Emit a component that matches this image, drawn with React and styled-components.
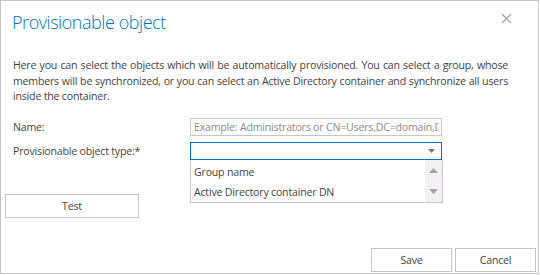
import React from 'react';
import styled, { createGlobalStyle } from 'styled-components';

const GlobalStyle = createGlobalStyle`
  html, body {
    margin: 0;
    padding: 0;
    background: #fff;
  }
  body {
    font-family: "Open Sans", "Noto Sans", sans-serif;
    color: #444;
  }
  * {
    box-sizing: border-box;
  }
`;

const Dialog = styled.div`
  width: 539px;
  height: 274px;
  border: 1px solid #c6c6c6;
  display: flex;
  flex-direction: column;
  background: #fff;
`;

const Header = styled.div`
  display: flex;
  align-items: flex-start;
  justify-content: space-between;
  padding: 8px 26px 0 11px;
  height: 44px;
`;

const Title = styled.h1`
  margin: 0;
  font-family: "Open Sans", "Noto Sans", sans-serif;
  font-weight: 300;
  font-size: 18px;
  line-height: 26px;
  letter-spacing: -0.45px;
  color: #0072c6;
`;

const CloseButton = styled.button`
  border: 0;
  background: none;
  padding: 0;
  margin-top: 4px;
  width: 11px;
  height: 11px;
  display: flex;
  cursor: pointer;
`;

const Body = styled.div`
  padding: 13px 30px 0 12px;
  display: flex;
  flex-direction: column;
`;

const Description = styled.p`
  margin: 0 0 13px;
  font-size: 10.6px;
  letter-spacing: -0.2px;
  line-height: 15.5px;
  text-align: justify;
  color: #444;
`;

const FormGrid = styled.div`
  display: grid;
  grid-template-columns: 177px 252px;
  row-gap: 6px;
  align-items: center;
`;

const Label = styled.label`
  font-size: 10.6px;
  letter-spacing: -0.2px;
  color: #444;
`;

const TextInput = styled.input`
  height: 18px;
  width: 252px;
  border: 1px solid #c6c6c6;
  padding: 0 3px;
  font-family: inherit;
  font-size: 10.6px;
  letter-spacing: -0.2px;
  color: #444;
  outline: none;
  &::placeholder {
    color: #8a8a8a;
  }
`;

const SelectWrap = styled.div`
  position: relative;
  width: 252px;
`;

const SelectBox = styled.div`
  height: 18px;
  border: 1px solid #0072c6;
  display: flex;
  align-items: center;
  justify-content: flex-end;
  padding-right: 6px;
`;

const List = styled.div`
  position: absolute;
  left: 0;
  top: 18px;
  width: 253px;
  height: 43px;
  border: 1px solid #c6c6c6;
  border-top: 0;
  background: #fff;
  display: flex;
  z-index: 10;
`;

const Options = styled.div`
  flex: 1;
  display: flex;
  flex-direction: column;
  padding-top: 2px;
`;

const Option = styled.div`
  height: 20px;
  line-height: 20px;
  padding-left: 3px;
  font-size: 10.6px;
  letter-spacing: -0.2px;
  color: #444;
  white-space: nowrap;
`;

const Scrollbar = styled.div`
  width: 17px;
  background: #f4f1f4;
  display: flex;
  flex-direction: column;
  justify-content: space-between;
  align-items: center;
  padding: 8px 0 8px;
`;

const Actions = styled.div`
  padding: 0 0 0 4px;
  margin-top: 33px;
`;

const Button = styled.button`
  width: ${({ $width }) => $width}px;
  height: 24px;
  border: 1px solid #c6c6c6;
  background: #fff;
  font-family: inherit;
  font-size: 10.6px;
  letter-spacing: -0.2px;
  color: #444;
  padding: 0;
  cursor: pointer;
`;

const Footer = styled.div`
  margin-top: auto;
  display: flex;
  justify-content: flex-end;
  gap: 3px;
  padding: 0 2px 1px 0;
`;

const Triangle = ({ up }) => (
  <svg width="9" height="5" viewBox="0 0 9 5">
    <path d={up ? 'M0 5 L4.5 0 L9 5 Z' : 'M0 0 L4.5 5 L9 0 Z'} fill="#a5a5a5" />
  </svg>
);

const App = () => (
  <>
    <GlobalStyle />
    <Dialog>
      <Header>
        <Title>Provisionable object</Title>
        <CloseButton aria-label="Close">
          <svg width="11" height="11" viewBox="0 0 11 11">
            <path d="M1 1 L10 10 M10 1 L1 10" stroke="#a8a8a8" strokeWidth="1.3" />
          </svg>
        </CloseButton>
      </Header>
      <Body>
        <Description>
          Here you can select the objects which will be automatically provisioned. You can select a group, whose
          members will be synchronized, or you can select an Active Directory container and synchronize all users
          inside the container.
        </Description>
        <FormGrid>
          <Label>Name:</Label>
          <TextInput placeholder="Example: Administrators or CN=Users,DC=domain,DC=com" />
          <Label>Provisionable object type:*</Label>
          <SelectWrap>
            <SelectBox>
              <svg width="7" height="4" viewBox="0 0 7 4">
                <path d="M0 0 L3.5 4 L7 0 Z" fill="#777" />
              </svg>
            </SelectBox>
            <List>
              <Options>
                <Option>Group name</Option>
                <Option>Active Directory container DN</Option>
              </Options>
              <Scrollbar>
                <Triangle up />
                <Triangle />
              </Scrollbar>
            </List>
          </SelectWrap>
        </FormGrid>
      </Body>
      <Actions>
        <Button $width={134}>Test</Button>
      </Actions>
      <Footer>
        <Button $width={81}>Save</Button>
        <Button $width={81}>Cancel</Button>
      </Footer>
    </Dialog>
  </>
);

export default App;
